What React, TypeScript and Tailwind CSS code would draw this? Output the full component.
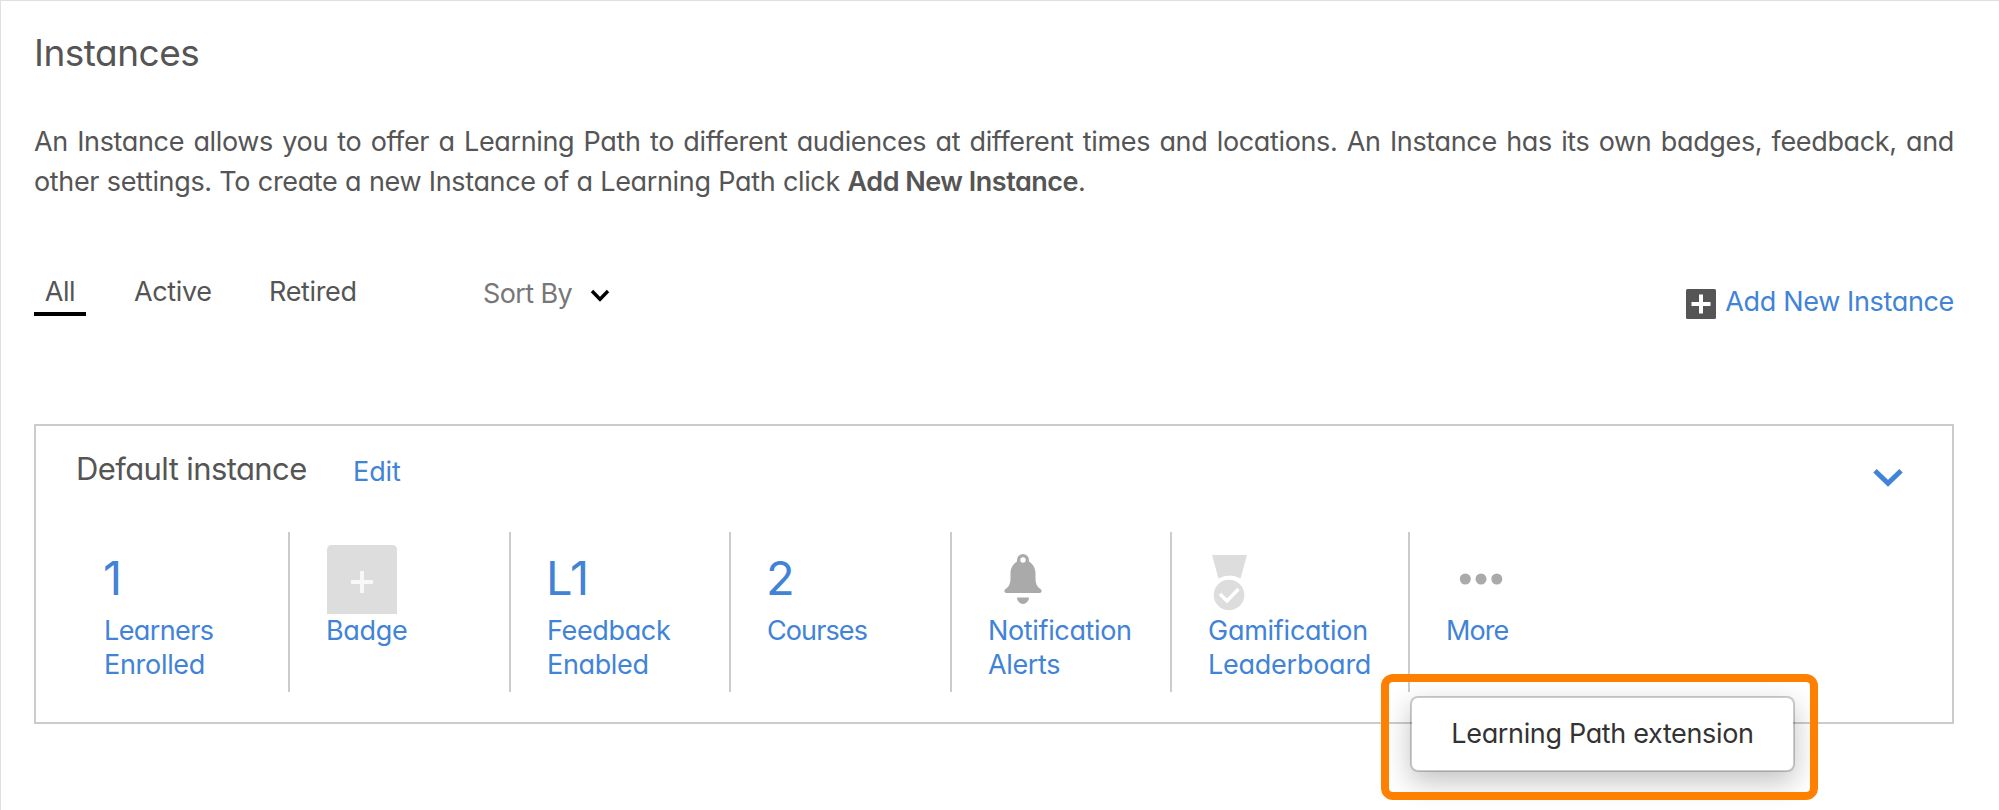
import type { ReactNode } from 'react';

function Column({ className, visual, children }: { className: string; visual: ReactNode; children: ReactNode }) {
  return (
    <div className={`h-[160px] shrink-0 border-[#cccccc] ${className}`}>
      <div className="h-[82px]">{visual}</div>
      <div className="text-[27px] leading-[34px] text-[#4183d7]">{children}</div>
    </div>
  );
}

function Figure({ children }: { children: ReactNode }) {
  return <div className="-ml-px pt-[22px] text-[47px] leading-[48px] text-[#4183d7]">{children}</div>;
}

export default function App() {
  return (
    <div className="relative h-[810px] w-[1999px] overflow-hidden border-t border-l border-[#e0e0e0] bg-white pt-7 pr-[45px] pl-[33px] font-['Inter',sans-serif] text-[27px] font-[385] tracking-[-0.35px] whitespace-nowrap text-[#555555] [font-feature-settings:'cv11']">
      <h1 className="text-[37px] leading-[48px] tracking-[-0.5px]"><span>Instances</span></h1>
      <p className="mt-[45px] leading-[40px]">
        <span className="block text-justify whitespace-normal [text-align-last:justify]">
          An Instance allows you to offer a Learning Path to different audiences at different times and locations. An Instance has its own badges, feedback, and
        </span>
        <span className="flex whitespace-pre">
          <span className="[word-spacing:0.4px]">other settings. To create a new Instance of a Learning Path click </span>
          <b className="font-semibold tracking-[-0.5px]">Add New Instance</b>
          <span>.</span>
        </span>
      </p>

      <div className="mt-[69px] flex h-[45px] items-start leading-[42px]">
        <div className="flex h-[45px] w-[52px] justify-center border-b-4 border-black"><span>All</span></div>
        <div className="ml-12 w-[135px]"><span>Active</span></div>
        <div className="w-[214px]"><span>Retired</span></div>
        <div className="flex w-[107px] pt-0.5 tracking-[-0.6px] text-[#777777]"><span>Sort By</span></div>
        <svg className="mt-[18px] h-3.5 w-5" viewBox="0 0 20 14" fill="none" stroke="#000" strokeWidth="3.4">
          <path d="M2 2l8 8.2L18 2" />
        </svg>
        <div className="ml-auto flex items-start pt-2.5">
          <svg className="mt-2 mr-[9px] h-[30px] w-[30px]" viewBox="0 0 30 30">
            <rect width="30" height="30" rx="1.5" fill="#555" />
            <path d="M15 5.5v19M5.5 15h19" stroke="#fff" strokeWidth="4" />
          </svg>
          <span className="text-[#4183d7]">Add New Instance</span>
        </div>
      </div>

      <section className="mt-[108px] h-[300px] border-2 border-[#cccccc] pt-[23px]">
        <div className="flex h-10 items-start pl-[40px] leading-[40px]">
          <h2 className="w-[277px] text-[31px] tracking-[-0.6px]"><span>Default instance</span></h2>
          <span className="pt-[3px] tracking-[-0.1px] text-[#4183d7]">Edit</span>
          <svg className="mt-[19px] mr-[49px] ml-auto h-5 w-[30px]" viewBox="0 0 30 20" fill="none" stroke="#4183d7" strokeWidth="5">
            <path d="M2 2.8l13 12.5L28 2.8" />
          </svg>
        </div>
        <div className="mt-[43px] flex">
          <Column className="w-[254px] border-r-2 pl-[68px] tracking-[-0.6px]" visual={<Figure><span>1</span></Figure>}>
            <span>Learners</span><br /><span className="tracking-[-0.3px]">Enrolled</span>
          </Column>
          <Column
            className="w-[221px] border-r-2 pl-9"
            visual={
              <svg className="h-[82px] w-[72px]" viewBox="0 0 72 82">
                <path d="M1 82V18q0-5 5-5h60q5 0 5 5v64z" fill="#ddd" />
                <path d="M36 39v22M25 50h22" stroke="#f8f8f8" strokeWidth="4" />
              </svg>
            }
          >
            <span>Badge</span>
          </Column>
          <Column className="w-[220px] border-r-2 pl-9" visual={<Figure><span>L1</span></Figure>}>
            <span>Feedback</span><br /><span>Enabled</span>
          </Column>
          <Column className="w-[221px] border-r-2 pl-9 tracking-[-0.9px]" visual={<Figure><span>2</span></Figure>}>
            <span>Courses</span>
          </Column>
          <Column
            className="w-[220px] border-r-2 pl-9"
            visual={
              <svg className="h-[81px] w-[72px]" viewBox="0 0 72 81" fill="#aaa">
                <path fillRule="evenodd" d="M35 22a6 6 0 0 1 6 6v1.500c4 2.500 6.500 6.500 6.500 12v5c0 5 1.500 8.500 5 10.500 1.700 1 1.500 4-.7 4H18.200c-2.200 0-2.400-3-.7-4 3.500-2 5-5.500 5-10.500v-5c0-5.500 2.500-9.500 6.500-12V28a6 6 0 0 1 6-6zm0 3.300a2.700 2.700 0 1 0 0 5.400 2.700 2.700 0 0 0 0-5.400z" />
                <path d="M29 65.500h12a6 6.500 0 0 1-12 0z" />
              </svg>
            }
          >
            <span>Notification</span><br /><span>Alerts</span>
          </Column>
          <Column
            className="w-[238px] border-r-2 pl-9 tracking-[-0.25px]"
            visual={
              <svg className="h-[81px] w-[48px]" viewBox="0 0 48 81">
                <path d="M4 23h35l-6.500 23.500q-10.500-6-22 0z" fill="#ddd" />
                <circle cx="21" cy="63" r="15.300" fill="#ddd" />
                <path d="M12 62l7 7L30.500 57" fill="none" stroke="#fff" strokeWidth="3.400" />
              </svg>
            }
          >
            <span>Gamification</span><br /><span>Leaderboard</span>
          </Column>
          <Column
            className="pl-9 tracking-[-0.9px]"
            visual={
              <svg className="h-[81px] w-[72px]" viewBox="0 0 72 81" fill="#aaa">
                <circle cx="19.300" cy="47" r="5.500" />
                <circle cx="35" cy="47" r="5.500" />
                <circle cx="50.800" cy="47" r="5.500" />
              </svg>
            }
          >
            <span>More</span>
          </Column>
        </div>
      </section>

      <div className="absolute top-[695px] left-[1409px] flex h-[76px] w-[385px] items-center justify-center rounded-[8px] border-2 border-black/20 bg-white bg-clip-padding text-[#333333] shadow-[0_10px_28px_rgba(0,0,0,0.24)]">
        <span>Learning Path extension</span>
      </div>
      <div className="absolute top-[673px] left-[1380px] h-[126px] w-[437px] rounded-[12px] border-8 border-[#ff8000]" />
    </div>
  );
}
